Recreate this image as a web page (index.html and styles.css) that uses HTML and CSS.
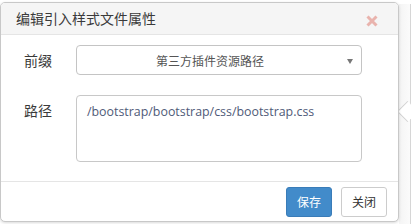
FILE: index.html
```html
<!DOCTYPE html>
<html>
<head>
<meta charset="utf-8">
<link rel="stylesheet" href="styles.css">
</head>
<body>
<div class="page">
  <div class="dialog">
    <div class="dlg-head">
      <span class="dlg-title">编辑引入样式文件属性</span>
      <span class="dlg-close" aria-label="close">
        <svg width="12" height="12" viewBox="0 0 12 12"><path d="M1.5 1.5 L10.5 10.5 M10.5 1.5 L1.5 10.5" stroke="#e9b3ad" stroke-width="3" stroke-linecap="butt"/></svg>
      </span>
    </div>
    <div class="dlg-body">
      <div class="row">
        <label class="lbl">前缀</label>
        <div class="select">
          <span class="select-text">第三方插件资源路径</span>
          <span class="caret"></span>
        </div>
      </div>
      <div class="row">
        <label class="lbl">路径</label>
        <div class="textarea">/bootstrap/bootstrap/css/bootstrap.css</div>
      </div>
    </div>
    <div class="dlg-foot">
      <button class="btn btn-primary">保存</button>
      <button class="btn btn-default">关闭</button>
    </div>
  </div>
  <div class="side">
    <div class="side-arrow"></div>
  </div>
</div>
</body>
</html>
```
FILE: styles.css
```css
html, body {
  margin: 0;
  padding: 0;
  background: #ffffff;
}
body {
  font-family: "Noto Sans", "Noto Sans CJK SC", sans-serif;
  color: #333;
  width: 411px;
  height: 224px;
  overflow: hidden;
}
.page {
  display: flex;
  position: relative;
  height: 224px;
}
.dialog {
  margin-top: 2px;
  width: 397px;
  height: 218px;
  border: 1px solid #c8c8c8;
  border-radius: 5px;
  box-shadow: 0 1px 3px rgba(0,0,0,0.15);
  background: #fff;
  display: flex;
  flex-direction: column;
  overflow: hidden;
  position: relative;
  z-index: 2;
}
.dlg-head {
  height: 31px;
  background: #f5f5f5;
  border-bottom: 1px solid #e5e5e5;
  display: flex;
  align-items: center;
  justify-content: space-between;
  padding: 0 20px 0 15px;
}
.dlg-title {
  font-family: "Noto Sans CJK SC", sans-serif;
  font-size: 14px;
  color: #3a3a3a;
  line-height: 1;
  margin-top: -1px;
}
.dlg-close {
  display: flex;
  margin-top: 5px;
}
.dlg-body {
  padding: 10px 36px 0 23px;
  display: flex;
  flex-direction: column;
  gap: 20px;
  height: 136px;
  border-bottom: 1px solid #e5e5e5;
}
.row {
  display: flex;
  align-items: flex-start;
}
.lbl {
  width: 52px;
  font-family: "Noto Sans CJK SC", sans-serif;
  font-size: 14px;
  color: #3a3a3a;
  line-height: 30px;
}
.select {
  flex: 1;
  height: 28px;
  border: 1px solid #c4c4c4;
  border-radius: 4px;
  display: flex;
  align-items: center;
  justify-content: center;
  position: relative;
}
.select-text {
  font-family: "Noto Sans CJK SC", sans-serif;
  font-size: 12px;
  color: #555;
  margin-right: 18px;
}
.caret {
  position: absolute;
  right: 8px;
  top: 13px;
  width: 0;
  height: 0;
  border-left: 3.5px solid transparent;
  border-right: 3.5px solid transparent;
  border-top: 5px solid #777;
}
.textarea {
  flex: 1;
  height: 53px;
  border: 1px solid #c8c8c8;
  border-radius: 4px;
  padding: 6px 10px;
  font-family: "Open Sans", sans-serif;
  font-size: 12.4px;
  color: #4f5a78;
  line-height: 20px;
}
.dlg-foot {
  flex: 1;
  display: flex;
  justify-content: flex-end;
  align-items: center;
  gap: 9px;
  padding: 0 11px 0 0;
}
.btn {
  height: 30px;
  width: 46px;
  border-radius: 3px;
  font-family: "Noto Sans CJK SC", sans-serif;
  font-size: 12px;
  padding: 0;
  margin-top: 0;
}
.btn-primary {
  background: #428bca;
  border: 1px solid #3a7cb8;
  color: #fff;
}
.btn-default {
  background: #fff;
  border: 1px solid #ccc;
  color: #333;
}
.side {
  flex: 1;
  position: relative;
  background: linear-gradient(to right, #f4f4f4, #fbfbfb);
  border-right: 1px solid #d6d6d6;
  margin-top: 4px;
}
.side-arrow {
  position: absolute;
  left: 1px;
  top: 100px;
  width: 14px;
  height: 14px;
  background: #fff;
  border-left: 1px solid #d0d0d0;
  border-bottom: 1px solid #d0d0d0;
  transform: rotate(45deg);
}
```
